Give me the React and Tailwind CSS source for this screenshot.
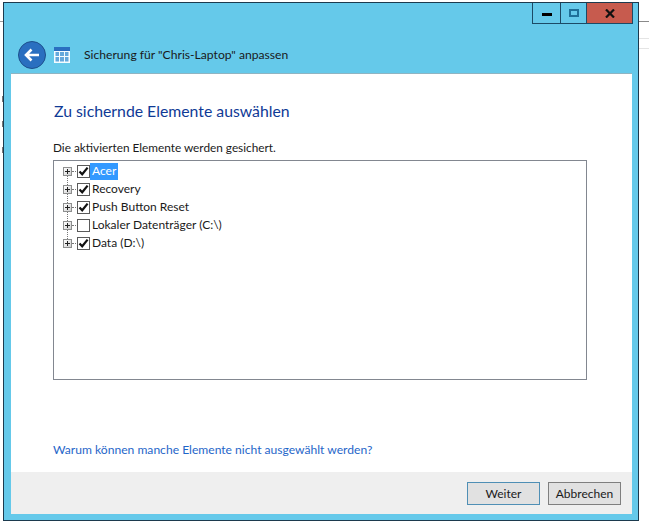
const font = { fontFamily: 'Lato, sans-serif' };

function Expander() {
  return (
    <span className="relative w-[9px] h-[9px] border border-[#8e8f8f] bg-[linear-gradient(135deg,#fff,#cfcfcf)] shrink-0 flex items-center justify-center">
      <svg width="7" height="7" viewBox="0 0 7 7">
        <path d="M1 3.5h5M3.5 1v5" stroke="#222" strokeWidth="1" />
      </svg>
    </span>
  );
}

function Check({ on }) {
  return (
    <span className="w-[13px] h-[13px] border border-[#5a5a5a] bg-white shrink-0 flex items-center justify-center">
      {on && (
        <svg width="11" height="11" viewBox="0 0 11 11">
          <path d="M1.5 5.5 L4.2 8.3 L9.6 1.6" fill="none" stroke="#111" strokeWidth="2.2" />
        </svg>
      )}
    </span>
  );
}

function Row({ label, on, selected, last }) {
  return (
    <div className="relative h-[18px] flex items-center pl-[9px]">
      {!last && <span className="absolute left-[13px] top-[13px] h-[14px] border-l border-dotted border-[#777]" />}
      <Expander />
      <span className="w-[4px] border-t border-dotted border-[#777] mr-[1px]" />
      <Check on={on} />
      <span className={`px-[2px] leading-[16px] h-[17px] text-[12px] ${selected ? "bg-[#3399ff] text-white" : "text-[#1a1a1a]"}`}>{label}</span>
    </div>
  );
}

export default function App() {
  const rows = [
    { label: "Acer", on: true, selected: true },
    { label: "Recovery", on: true },
    { label: "Push Button Reset", on: true },
    { label: "Lokaler Datenträger (C:\\)", on: false },
    { label: "Data (D:\\)", on: true, last: true },
  ];
  return (
    <div className="relative w-[649px] h-[529px] bg-white overflow-hidden pt-[2px] pl-[3px]" style={font}>
      <span className="absolute left-0 top-[21px] w-[3px] h-px bg-[#9a9a9a]" />
      <span className="absolute left-[2px] top-[96px] w-px h-[6px] bg-[#777]" />
      <span className="absolute left-[2px] top-[121px] w-px h-[6px] bg-[#777]" />
      <span className="absolute left-[2px] top-[147px] w-px h-[6px] bg-[#777]" />
      <span className="absolute right-0 top-[21px] w-[11px] h-px bg-[#8a8a8a]" />
      <span className="absolute right-0 top-[38px] w-[11px] h-px bg-[#e4e4e4]" />
      <span className="absolute right-0 top-[48px] w-[11px] h-px bg-[#e4e4e4]" />
      <div className="w-[636px] h-[519px] border border-[#1c3a4e] bg-[#65c9ea] flex flex-col pl-[7px] pr-[6px] pb-[6px] relative">
        <div className="absolute top-0 right-[5px] h-[21px] flex border-b border-l border-r border-[#1c4a66]">
          <div className="w-[28px] border-r border-[#1c4a66] flex items-center justify-center">
            <span className="w-[10px] h-[3px] bg-black mt-[3px]" />
          </div>
          <div className="w-[26px] border-r border-[#1c4a66] flex items-center justify-center">
            <span className="w-[10px] h-[8px] border-2 border-[#1f6f98]" />
          </div>
          <div className="w-[45px] bg-[#c75b4e] flex items-center justify-center text-black">
            <svg width="10" height="9" viewBox="0 0 10 9">
              <path d="M1 .5 L9 8.5 M9 .5 L1 8.5" stroke="#111" strokeWidth="2.2" />
            </svg>
          </div>
        </div>

        <div className="h-[70px] shrink-0 flex items-end pb-[4px] pl-[7px]">
          <div className="flex items-center h-[28px]">
            <div className="w-[28px] h-[28px] rounded-full bg-[#2a6fc0] border border-[#1d4f8c] flex items-center justify-center">
              <svg width="16" height="14" viewBox="0 0 16 14">
                <path d="M7.5 1.5 L2 7 L7.5 12.5 M2.5 7 H15" fill="none" stroke="#fff" strokeWidth="2.6" />
              </svg>
            </div>
            <svg className="ml-[8px]" width="16" height="16" viewBox="0 0 16 16">
              <rect x="0" y="0" width="16" height="16" fill="#f4fbff" />
              <rect x="0" y="0" width="16" height="4" fill="#2a6fc0" />
              <path d="M1.5 5h13v9.5h-13z" fill="#65a8dc" />
              <path d="M5.5 5v10M10.5 5v10M1 9.5h14" stroke="#f4fbff" strokeWidth="1" />
            </svg>
            <span className="ml-[14px] text-[12.15px] text-[#1a1a1a]">Sicherung für "Chris-Laptop" anpassen</span>
          </div>
        </div>

        <div className="flex-1 bg-white flex flex-col border-t border-[#8fb4c2] min-h-0">
          <div className="flex-1 flex flex-col pl-[42px] pr-[45px] min-h-0">
            <h1 className="mt-[26px] ml-px text-[15.8px] leading-[22px] font-normal text-[#0f3a96]">Zu sichernde Elemente auswählen</h1>
            <p className="mt-[18px] text-[11.8px] leading-[16px] text-[#1a1a1a]">Die aktivierten Elemente werden gesichert.</p>
            <div className="mt-[4px] h-[220px] border border-[#828790] pt-[1px]">
              {rows.map((r) => <Row key={r.label} {...r} />)}
            </div>
            <a className="mt-[62px] text-[12.1px] leading-[16px] text-[#1f66c9]">Warum können manche Elemente nicht ausgewählt werden?</a>
          </div>
          <div className="h-[42px] shrink-0 bg-[#efefef] flex items-start justify-end gap-[8px] pt-[10px] pr-[11px]">
            <button className="w-[73px] h-[23px] border border-[#4f8fb5] bg-[#e1e1e1] text-[12px] text-[#1a1a1a]">Weiter</button>
            <button className="w-[73px] h-[23px] border border-[#7f7f7f] bg-[#e1e1e1] text-[12px] text-[#1a1a1a]">Abbrechen</button>
          </div>
        </div>
      </div>
    </div>
  );
}
